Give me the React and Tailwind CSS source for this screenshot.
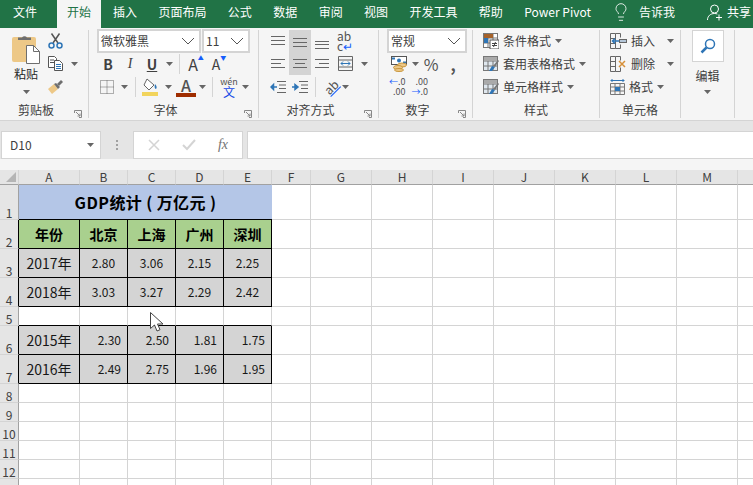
import { Lightbulb } from "lucide-react";

const COLS = ["A", "B", "C", "D", "E", "F", "G", "H", "I", "J", "K", "L", "M", "N"];
const EMPTY_COLS = COLS.slice(5);

const BODY = [
  { row: 3, year: "2017年", values: ["2.80", "3.06", "2.15", "2.25"], center: true },
  { row: 4, year: "2018年", values: ["3.03", "3.27", "2.29", "2.42"], center: true },
  { row: 6, year: "2015年", values: ["2.30", "2.50", "1.81", "1.75"], center: false },
  { row: 7, year: "2016年", values: ["2.49", "2.75", "1.96", "1.95"], center: false },
];

const Caret = ({ className = "" }) => (
  <svg width="7" height="4" viewBox="0 0 7 4" className={className}>
    <path d="M0 0h7L3.5 4z" fill="#666" />
  </svg>
);

const Chevron = () => (
  <svg width="14" height="8" viewBox="0 0 14 8" fill="none" stroke="#555">
    <path d="M1 1l6 6 6-6" />
  </svg>
);

const Launcher = () => (
  <svg width="8" height="8" viewBox="0 0 8 8" fill="none" stroke="#888" className="absolute right-1.5 bottom-0">
    <path d="M.5 3V.5H7.5V7.5H5M2 2l4 4M6 3.5V6H3.5" />
  </svg>
);

// horizontal text-alignment glyph, each line is [x1, x2, y]
const Lines = ({ lines }) => (
  <svg width="16" height="16" viewBox="0 0 16 16" stroke="#666">
    {lines.map(([a, b, y]) => (
      <path key={y} d={`M${a} ${y + 0.5}H${b}`} />
    ))}
  </svg>
);

const Indent = ({ flip }) => (
  <svg width="16" height="14" viewBox="0 0 16 14" fill="none">
    <path d="M7 1.5h9M9 5h7M9 8.500h7M7 12.500h9" stroke="#666" />
    {flip ? (
      <path d="M0 7h4M3 4.500L6 7 3 9.500z" stroke="#2e75b6" strokeWidth="1.500" fill="#2e75b6" />
    ) : (
      <path d="M2 7h5M3.500 4.500L1 7l2.500 2.500z" stroke="#2e75b6" strokeWidth="1.500" fill="#2e75b6" />
    )}
  </svg>
);

const Clipboard = () => (
  <svg width="29" height="30" viewBox="0 0 29 30">
    <rect y="3" width="24" height="25" rx="2" fill="#edc887" />
    <path d="M6 6V3.500h4a3 3 0 0 1 5 0h4V6z" fill="#6e6e6e" />
    <path d="M14.500 11.500h7l6 6v12h-13z" fill="#fff" stroke="#6e6e6e" />
    <path d="M21.500 11.500v6h6" fill="none" stroke="#6e6e6e" />
  </svg>
);

const ScissorsIcon = () => (
  <svg width="15" height="16" viewBox="0 0 15 16" fill="none">
    <path d="M5 10L11.500 .5M10 10L3.500 .5" stroke="#555" strokeWidth="1.500" />
    <circle cx="3.500" cy="12.500" r="2.500" stroke="#2e75b6" strokeWidth="1.500" />
    <circle cx="11.500" cy="12.500" r="2.500" stroke="#2e75b6" strokeWidth="1.500" />
  </svg>
);

const CopyIcon = () => (
  <svg width="15" height="15" viewBox="0 0 15 15" fill="#fff">
    <path d="M.5.5h6l2 2v9h-8z" stroke="#555" />
    <path d="M2 4h4M2 6.500h4" stroke="#555" />
    <path d="M6.500 4.500h5l3 3v7h-8z" stroke="#555" />
    <path d="M8 8.500h5M8 10.500h5M8 12.500h5" stroke="#2e75b6" />
  </svg>
);

const BrushIcon = () => (
  <svg width="16" height="15" viewBox="0 0 16 15">
    <path d="M0 10l6-5 4 5-6 5z" fill="#edc887" />
    <path d="M6 5l4 5 2-2-4-4z" fill="#6e6e6e" />
    <path d="M9 5l4-4 2 2-4 4z" fill="#6e6e6e" />
  </svg>
);

const BorderIcon = () => (
  <svg width="14" height="14" viewBox="0 0 14 14" fill="none" stroke="#666" strokeDasharray="1 1">
    <path d="M.5.5h13v13H.5zM7 .5v13M.5 7h13" />
  </svg>
);

const FillIcon = () => (
  <svg width="17" height="18" viewBox="0 0 17 18">
    <path d="M5 1l7 6-5 5-5-5z" fill="#fff" stroke="#666" />
    <path d="M13 6c2 2 2 4 1 5-1 0-2-2-1-5z" fill="#2e75b6" />
    <rect y="14" width="16" height="4" fill="#f2d45c" />
  </svg>
);

const AccountingIcon = () => (
  <svg width="17" height="16" viewBox="0 0 17 16" fill="none">
    <rect x=".5" y=".5" width="15" height="8" fill="#fff" stroke="#555" />
    <path d="M1 2.500h3M12 6.500h3" stroke="#2e75b6" strokeWidth="2" />
    <circle cx="8" cy="4.500" r="2" fill="#2e75b6" />
    <ellipse cx="11" cy="9" rx="4.500" ry="2" fill="#edc887" stroke="#c8963e" />
    <ellipse cx="7" cy="11.500" rx="4.500" ry="2" fill="#edc887" stroke="#c8963e" />
    <ellipse cx="8" cy="14" rx="4.500" ry="1.500" fill="#edc887" stroke="#c8963e" />
  </svg>
);

const SheetGrid = ({ children, tint = "#fff" }) => (
  <svg width="16" height="16" viewBox="0 0 16 16" fill="none">
    <rect x=".5" y=".5" width="14" height="14" fill={tint} stroke="#777" />
    <path d="M5 .5v14M10 .5v14M.5 5h14M.5 10h14" stroke="#777" />
    {children}
  </svg>
);

const CondIcon = () => (
  <SheetGrid>
    <rect x="1" y="1" width="9" height="4" fill="#a5622a" />
    <rect x="1" y="5" width="4" height="5" fill="#2e75b6" />
    <rect x="7" y="7" width="9" height="9" fill="#fff" stroke="#555" />
    <path d="M9 10.500h5M9 12.500h5M12.500 9l-2 5" stroke="#444" />
  </SheetGrid>
);

const TableStyleIcon = () => (
  <SheetGrid tint="#dfe7ee">
    <rect x="1" y="1" width="13" height="4" fill="#aaa" />
    <path d="M6 15l3-5 3 1-3 4z" fill="#2e75b6" />
    <path d="M10 10l5-6 1 1-4 6z" fill="#777" />
  </SheetGrid>
);

const InsertIcon = () => (
  <svg width="17" height="16" viewBox="0 0 17 16" fill="none" stroke="#666">
    <path d="M.5.5h5v15h-5zM.5 5.500h5M.5 10.500h5M5.500 .5h5v4M5.500 15.500h5v-4" />
    <rect x="9.500" y="6.500" width="7" height="3" fill="#b4c6d8" />
    <path d="M9 8H3M5 5.500L2.500 8 5 10.500" stroke="#2e75b6" strokeWidth="1.500" />
  </svg>
);

const DeleteIcon = () => (
  <svg width="17" height="16" viewBox="0 0 17 16" fill="none" stroke="#666">
    <path d="M.5.5h5v15h-5zM.5 5.500h5M.5 10.500h5M5.500 .5h5v4M5.500 15.500h5v-4" />
    <path d="M9 5l6 6M15 5l-6 6" stroke="#d6903a" strokeWidth="1.500" />
  </svg>
);

const FormatIcon = () => (
  <svg width="15" height="16" viewBox="0 0 15 16" fill="none" stroke="#777">
    <path d="M.5 1.500h14M2 0v3M13 0v3" stroke="#2e75b6" />
    <path d="M.5 4.500h14v11H.5zM.5 8h14M.5 12h14M5 4.500v11M10 4.500v11" />
    <rect x="5" y="8" width="5" height="4" fill="#2e75b6" stroke="none" />
  </svg>
);

const ShareIcon = () => (
  <svg width="16" height="17" viewBox="0 0 16 17" fill="none" stroke="#fff">
    <circle cx="7.500" cy="5" r="4" />
    <path d="M.5 16c0-4 3-6.500 7-6.500 1 0 2 .2 2.800.5M12 10.500v6M9 13.500h6" />
  </svg>
);

const Select = ({ children, className }) => (
  <div className={`flex h-6 items-center justify-between border-2 border-neutral-300 bg-white pr-1 pl-0.5 text-xs text-neutral-700 ${className}`}>
    {children}
    <Chevron />
  </div>
);

const Group = ({ label, launcher, children }) => (
  <div className="relative mt-0.5 mb-1 flex flex-col border-r border-neutral-300">
    {children}
    <div className={`mt-1 text-center text-xs leading-4 text-neutral-700 ${launcher ? "pr-4" : ""}`}>{label}</div>
    {launcher && <Launcher />}
  </div>
);

const Rows = ({ children, className = "" }) => (
  <div className={`grid h-17 grid-rows-3 ${className}`}>{children}</div>
);

const Tool = ({ children, active, className = "w-5.5" }) => (
  <div className={`flex h-full items-center justify-center ${active ? "bg-neutral-300" : ""} ${className}`}>
    {children}
  </div>
);

const Divider = () => <div className="mx-1 h-5 border-l border-neutral-300" />;

const StyleRow = ({ icon, label }) => (
  <div className="flex items-center gap-1 text-xs text-neutral-700">
    {icon}
    <span>{label}</span>
    <Caret />
  </div>
);

function Ribbon() {
  return (
    <div className="grid h-23 grid-cols-[89px_170px_120px_94px_127px_81px_54px] bg-neutral-100">
      <Group label="剪贴板" launcher>
        <div className="flex h-17 gap-2 pt-1 pl-3">
          <div className="flex w-7 flex-col items-center text-xs text-neutral-800">
            <Clipboard />
            <span className="mt-0.5 leading-4">粘贴</span>
            <Caret className="mt-2" />
          </div>
          <div className="-mt-1 grid h-17 grid-rows-3 items-center">
            <ScissorsIcon />
            <div className="flex items-center gap-2">
              <CopyIcon />
              <Caret />
            </div>
            <BrushIcon />
          </div>
        </div>
      </Group>

      <Group label="字体" launcher>
        <Rows className="px-2">
          <div className="flex items-center gap-px">
            <Select className="w-26">微软雅黑</Select>
            <Select className="w-12">11</Select>
          </div>
          <div className="flex items-center text-sm text-neutral-700">
            <Tool><span className="font-bold">B</span></Tool>
            <Tool><span className="font-['Liberation_Serif',serif] italic">I</span></Tool>
            <Tool><span className="font-bold underline">U</span></Tool>
            <Tool className="w-3"><Caret /></Tool>
            <Divider />
            <Tool className="w-6"><span className="text-base">A</span><span className="-mt-3 text-[6px] text-blue-600">▲</span></Tool>
            <Tool><span>A</span><span className="-mt-3 text-[6px] text-blue-600">▼</span></Tool>
          </div>
          <div className="flex items-center">
            <Tool className="w-5"><BorderIcon /></Tool>
            <Tool className="w-3.5"><Caret /></Tool>
            <Divider />
            <Tool className="w-5"><FillIcon /></Tool>
            <Tool className="w-4"><Caret /></Tool>
            <Tool className="w-5">
              <div className="flex flex-col items-center text-base leading-none font-medium text-neutral-600">
                A
                <div className="h-1 w-5 bg-orange-800" />
              </div>
            </Tool>
            <Tool className="w-3"><Caret /></Tool>
            <Divider />
            <Tool className="w-6">
              <div className="flex flex-col items-center text-xs leading-2.5 text-neutral-600">
                <span className="text-[9px]">wén</span>
                <span className="text-blue-700">文</span>
              </div>
            </Tool>
            <Tool className="w-2"><Caret /></Tool>
          </div>
        </Rows>
      </Group>

      <Group label="对齐方式" launcher>
        <Rows className="pl-2">
          <div className="flex items-center">
            <Tool><Lines lines={[[1, 15, 3], [1, 15, 7], [1, 15, 11]]} /></Tool>
            <Tool active><Lines lines={[[1, 15, 5], [1, 15, 9], [1, 15, 13]]} /></Tool>
            <Tool><Lines lines={[[1, 15, 8], [1, 15, 11], [1, 15, 15]]} /></Tool>
            <Tool className="w-6">
              <div className="flex flex-col text-xs leading-2.5 text-neutral-600">
                <span>ab</span>
                <span>c<span className="text-blue-600">↵</span></span>
              </div>
            </Tool>
          </div>
          <div className="flex items-center">
            <Tool><Lines lines={[[1, 15, 3], [1, 11, 7], [1, 15, 11]]} /></Tool>
            <Tool active><Lines lines={[[1, 15, 3], [3, 13, 7], [1, 15, 11]]} /></Tool>
            <Tool><Lines lines={[[1, 15, 3], [5, 15, 7], [1, 15, 11]]} /></Tool>
            <Tool className="w-6">
              <svg width="15" height="15" viewBox="0 0 15 15" fill="none" stroke="#666">
                <path d="M.5.5h14v14H.5zM.5 4h14M.5 11h14" />
                <path d="M3 7.500h9M3 7.500l2-2M3 7.500l2 2M12 7.500l-2-2M12 7.500l-2 2" stroke="#2e75b6" />
              </svg>
            </Tool>
            <Caret className="ml-1" />
          </div>
          <div className="flex items-center">
            <Tool><Indent /></Tool>
            <Tool><Indent flip /></Tool>
            <Divider />
            <Tool>
              <span className="-rotate-45 text-xs leading-none text-neutral-600 underline decoration-blue-600">ab</span>
            </Tool>
            <Caret />
          </div>
        </Rows>
      </Group>

      <Group label="数字" launcher>
        <Rows className="px-2">
          <div className="flex items-center">
            <Select className="w-20">常规</Select>
          </div>
          <div className="flex items-center text-neutral-600">
            <Tool className="ml-0.5 w-5"><AccountingIcon /></Tool>
            <Tool className="w-3"><Caret /></Tool>
            <Tool className="w-5"><span className="text-base">%</span></Tool>
            <Tool className="w-6"><span className="text-base font-bold">,</span></Tool>
          </div>
          <div className="flex items-center gap-1.5 pl-0.5 text-[9px] leading-2.5 text-neutral-600">
            <div className="flex flex-col items-end">
              <span><span className="text-blue-600">←</span>.0</span>
              <span>.00</span>
            </div>
            <div className="flex flex-col items-end">
              <span>.00</span>
              <span><span className="text-blue-600">→</span>.0</span>
            </div>
          </div>
        </Rows>
      </Group>

      <Group label="样式">
        <Rows className="items-center pl-2.5">
          <StyleRow icon={<CondIcon />} label="条件格式" />
          <StyleRow icon={<TableStyleIcon />} label="套用表格格式" />
          <StyleRow icon={<TableStyleIcon />} label="单元格样式" />
        </Rows>
      </Group>

      <Group label="单元格">
        <Rows className="items-center pl-2.5">
          <div className="flex items-center gap-1 text-xs text-neutral-700">
            <InsertIcon /><span>插入</span><Caret className="ml-2" />
          </div>
          <div className="flex items-center gap-1 text-xs text-neutral-700">
            <DeleteIcon /><span>删除</span><Caret className="ml-2" />
          </div>
          <StyleRow icon={<FormatIcon />} label="格式" />
        </Rows>
      </Group>

      <Group>
        <div className="flex flex-col items-center text-xs text-neutral-700">
          <div className="flex size-8 items-center justify-center border border-neutral-300 bg-white">
            <svg width="16" height="16" viewBox="0 0 16 16" fill="none" stroke="#2e75b6">
              <circle cx="10" cy="6" r="4.500" strokeWidth="1.500" />
              <path d="M6.500 9.500L1.500 14.500" strokeWidth="2.500" />
            </svg>
          </div>
          <span className="mt-1.5 leading-4">编辑</span>
          <Caret className="mt-1.5" />
        </div>
      </Group>
    </div>
  );
}

function FormulaBar() {
  return (
    <div className="border-t border-neutral-300 bg-neutral-200 pt-2.5">
      <div className="flex h-7 pl-px">
        <div className="flex w-25 items-center justify-between border border-neutral-300 bg-white pr-1.5 pl-2 text-xs text-neutral-700">
          D10
          <Caret />
        </div>
        <div className="flex w-8 flex-col items-center justify-center gap-0.5">
          <div className="size-0.5 bg-neutral-400" />
          <div className="size-0.5 bg-neutral-400" />
          <div className="size-0.5 bg-neutral-400" />
        </div>
        <div className="flex w-27.5 items-center justify-between border border-neutral-300 bg-white px-3.5 text-neutral-300">
          <svg width="12" height="12" viewBox="0 0 12 12" stroke="currentColor" strokeWidth="1.500">
            <path d="M1 1l10 10M11 1L1 11" />
          </svg>
          <svg width="14" height="12" viewBox="0 0 14 12" fill="none" stroke="currentColor" strokeWidth="2">
            <path d="M1 6l4 4 8-9" />
          </svg>
          <span className="font-['Liberation_Serif',serif] text-sm text-neutral-500 italic">fx</span>
        </div>
        <div className="ml-1 flex-1 border-y border-l border-neutral-300 bg-white" />
      </div>
      <div className="h-2.75 bg-neutral-100" />
    </div>
  );
}

const plainCell = "border-r border-b border-neutral-300 bg-white";
const ColHeader = ({ name }) => (
  <div className="flex items-center justify-center border-r border-b border-r-neutral-300 border-b-neutral-400 bg-neutral-200 text-xs text-neutral-700">
    {name}
  </div>
);
const RowHeader = ({ n, dark }) => (
  <div className={`flex items-end justify-center border-r border-b border-b-neutral-300 bg-neutral-200 text-xs leading-3 text-neutral-700 ${dark ? "border-r-black" : "border-r-neutral-400"}`}>
    {n}
  </div>
);
const Blank = () => EMPTY_COLS.map((c) => <div key={c} className={plainCell} />);

function Sheet() {
  return (
    <div className="grid grid-cols-[19px_61px_repeat(4,48px)_39px_repeat(8,61px)] grid-rows-[15px_35px_repeat(3,29px)_19px_repeat(2,29px)_repeat(6,19px)] text-neutral-900">
      <div className="flex items-end justify-end border-r border-b border-r-neutral-300 border-b-neutral-400 bg-neutral-200 p-0.5">
        <svg width="10" height="10" viewBox="0 0 10 10"><path d="M10 0v10H0z" fill="#b5b5b5" /></svg>
      </div>
      {COLS.map((c) => <ColHeader key={c} name={c} />)}

      <RowHeader n={1} />
      <div className="col-span-5 flex items-center justify-center border-b border-black bg-[#b4c6e7] text-base font-bold tracking-wide whitespace-pre text-black">
        GDP统计 ( 万亿元 )
      </div>
      <Blank />

      <RowHeader n={2} dark />
      {["年份", "北京", "上海", "广州", "深圳"].map((h) => (
        <div key={h} className="flex items-center justify-center border-r border-b border-black bg-[#a9d08e] text-sm font-bold text-black">
          {h}
        </div>
      ))}
      <Blank />

      {BODY.slice(0, 2).map((r) => <DataRow key={r.row} {...r} />)}

      <RowHeader n={5} />
      {COLS.slice(0, 5).map((c) => (
        <div key={c} className="border-r border-b border-r-neutral-300 border-b-black bg-white" />
      ))}
      <Blank />

      {BODY.slice(2).map((r) => <DataRow key={r.row} {...r} />)}

      {[8, 9, 10, 11, 12, 13].map((n) => (
        <div key={n} className="contents">
          <RowHeader n={n} />
          {COLS.map((c) => <div key={c} className={plainCell} />)}
        </div>
      ))}
    </div>
  );
}

function DataRow({ row, year, values, center }) {
  return (
    <>
      <RowHeader n={row} dark />
      <div className="flex items-center justify-center border-r border-b border-black bg-neutral-300 text-sm">
        {year}
      </div>
      {values.map((v, i) => (
        <div
          key={i}
          className={`flex items-center border-r border-b border-black bg-neutral-300 text-xs ${center ? "justify-center" : "justify-end pr-1.5"}`}
        >
          {v}
        </div>
      ))}
      <Blank />
    </>
  );
}

const TABS = ["插入", "页面布局", "公式", "数据", "审阅", "视图", "开发工具", "帮助", "Power Pivot"];

export default function App() {
  return (
    <div className="relative h-screen overflow-hidden bg-white font-['Noto_Sans_CJK_SC','Liberation_Sans',sans-serif]">
      <div className="flex h-7 bg-[#217346] pl-px text-xs text-white">
        <div className="flex w-14 items-center pb-1 pl-3">文件</div>
        <div className="flex w-11 items-center justify-center bg-neutral-100 pb-1 text-[#217346]">开始</div>
        <div className="ml-0.5 flex flex-1 justify-between">
          {TABS.map((t) => (
            <div key={t} className="flex items-center px-2.5 pb-1 whitespace-nowrap">{t}</div>
          ))}
        </div>
        <div className="flex w-38 items-center pb-1 pl-2.5 whitespace-nowrap">
          <Lightbulb className="size-5" strokeWidth={1} />
          <span className="ml-2">告诉我</span>
          <span className="ml-8"><ShareIcon /></span>
          <span className="ml-1">共享</span>
        </div>
      </div>
      <Ribbon />
      <FormulaBar />
      <Sheet />

      {/* mouse pointer over the sheet */}
      <svg width="14" height="21" viewBox="0 0 14 21" className="absolute top-78 left-37.5">
        <path d="M.5.5v16l4-3.500 2.500 6 3-1.300-2.500-5.700h5.500z" fill="#fff" stroke="#444" />
      </svg>
    </div>
  );
}
